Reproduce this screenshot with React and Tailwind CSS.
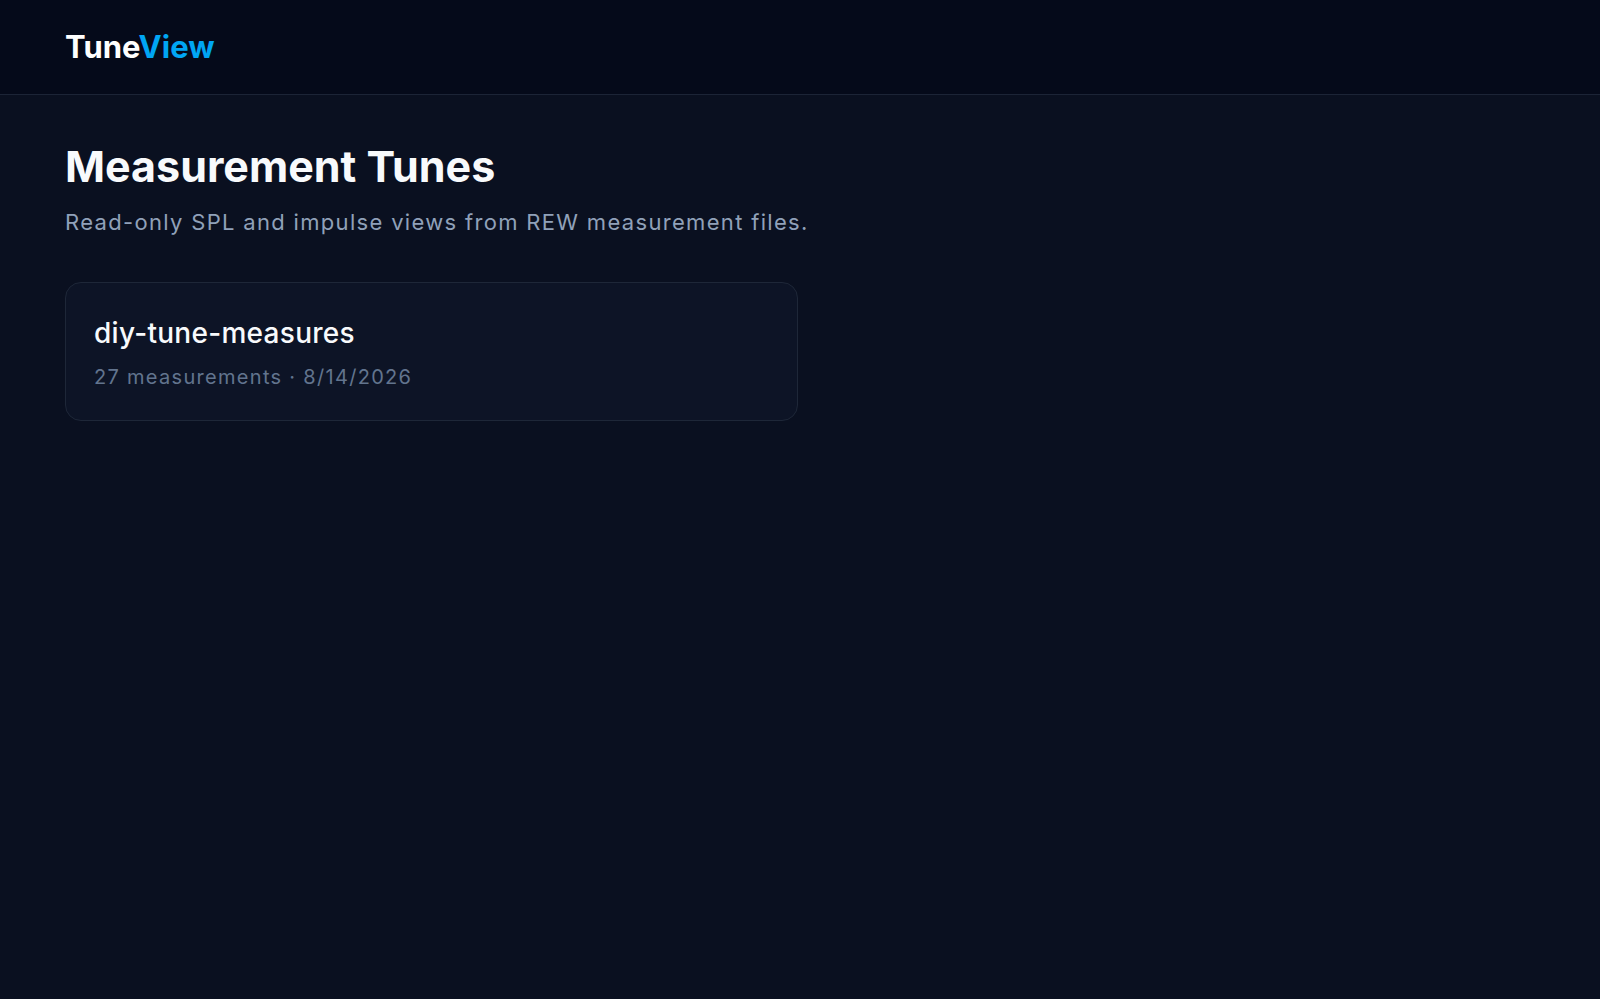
import React from "react";

const tunes = [
  { name: "diy-tune-measures", count: 27, date: "8/14/2026" },
];

const App = () => {
  return (
    <div
      className="min-h-screen bg-[#0a1020] text-slate-100"
      style={{ fontFamily: "Inter, 'Noto Sans', sans-serif" }}
    >
      <header className="h-[95px] flex items-center px-[65px] bg-[#050a1a] border-b border-[#1c2436]">
        <div className="text-[31px] leading-[36px] font-bold text-white">
          Tune<span className="text-sky-500">View</span>
        </div>
      </header>

      <main className="px-[65px] pt-[45px]">
        <h1 className="text-[43px] leading-[52px] font-bold text-slate-50">
          Measurement Tunes
        </h1>
        <p className="mt-[14px] text-[22px] leading-[32px] tracking-[0.06em] text-slate-400">
          Read-only SPL and impulse views from REW measurement files.
        </p>

        <div className="mt-[44px] grid grid-cols-2 gap-[4px]">
          {tunes.map((tune, index) => (
            <div
              key={index}
              className="rounded-2xl border border-[#1e2738] bg-[#0d1426] px-7 pt-8 pb-[29px]"
            >
              <h2 className="text-[28px] leading-[36px] font-medium tracking-[0.01em] text-slate-50">
                {tune.name}
              </h2>
              <p className="mt-3 text-[20px] leading-[28px] tracking-[0.065em] text-slate-500">
                {tune.count} measurements · {tune.date}
              </p>
            </div>
          ))}
        </div>
      </main>
    </div>
  );
};

export default App;
